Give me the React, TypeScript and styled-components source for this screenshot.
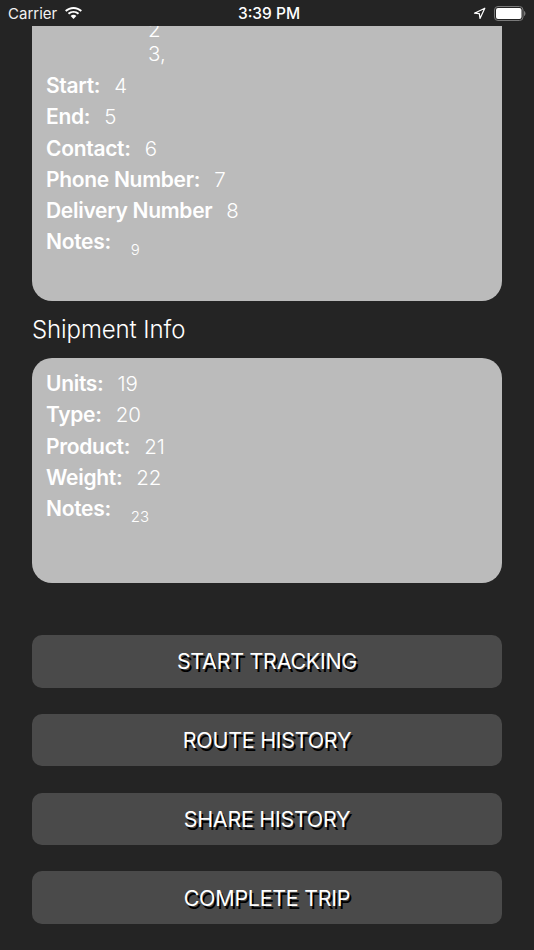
import React, { FC } from 'react'
import styled, { createGlobalStyle } from 'styled-components'

const GlobalStyle = createGlobalStyle`
  html, body {
    margin: 0;
    padding: 0;
    background: #242424;
  }
  * {
    box-sizing: border-box;
  }
`

const Screen = styled.div`
  width: 534px;
  height: 950px;
  background: #242424;
  color: #fff;
  font-family: Inter, 'Noto Sans', sans-serif;
  display: flex;
  flex-direction: column;
  overflow: hidden;
`

const StatusBar = styled.header`
  height: 26px;
  flex: none;
  display: grid;
  grid-template-columns: 1fr auto 1fr;
  align-items: center;
  padding: 0 8px 0 8px;
`

const StatusLeft = styled.div`
  display: flex;
  align-items: center;
  gap: 7px;
  font-size: 15px;
  color: #f2f2f2;
`

const Clock = styled.div`
  font-size: 15.5px;
  font-weight: 500;
  margin-left: 4px;
`

const StatusRight = styled.div`
  display: flex;
  align-items: center;
  justify-content: flex-end;
  gap: 8px;
`

const Viewport = styled.main`
  flex: 1;
  min-height: 0;
  overflow: hidden;
  padding: 0 32px;
`

const Card = styled.section<{ $height: number; $clipped?: boolean }>`
  height: ${({ $height }) => $height}px;
  background: #bbbbbb;
  border-radius: ${({ $clipped }) => ($clipped ? '0 0 20px 20px' : '20px')};
  padding: ${({ $clipped }) => ($clipped ? '0' : '10px')} 14px 0;
  overflow: hidden;
`

const AddressLines = styled.div`
  padding-left: 102px;
  font-size: 20.5px;
  font-weight: 350;
  line-height: 24px;
  height: 40px;
  margin-bottom: 4px;
  display: flex;
  flex-direction: column;
  justify-content: flex-end;
`

const Row = styled.div`
  display: flex;
  align-items: baseline;
  gap: 14px;
  height: 31.3px;
  line-height: 31.3px;
  white-space: nowrap;
`

const Label = styled.span`
  font-size: 21px;
  font-weight: 600;
  letter-spacing: -0.3px;
`

const Value = styled.span<{ $small?: boolean }>`
  font-size: ${({ $small }) => ($small ? 15 : 20.5)}px;
  font-weight: 350;
  ${({ $small }) => $small && 'position: relative; top: 6px; margin-left: 6px;'}
`

const SectionTitle = styled.h2`
  margin: 0;
  height: 57px;
  display: flex;
  align-items: center;
  font-size: 24px;
  font-weight: 350;
  letter-spacing: -0.1px;
`

const Actions = styled.div`
  display: flex;
  flex-direction: column;
  gap: 26.3px;
  margin-top: 52px;
`

const ActionButton = styled.button`
  height: 52.5px;
  width: 100%;
  border: 0;
  border-radius: 10px;
  background: #4a4a4a;
  color: #fff;
  font-family: inherit;
  font-size: 21.5px;
  font-weight: 400;
  letter-spacing: -0.3px;
  text-shadow: 2px 2.5px 0.5px #000;
`

interface InfoRowProps {
  label: string
  value: string
  small?: boolean
}

const InfoRow: FC<InfoRowProps> = ({ label, value, small }) => (
  <Row>
    <Label>{label}</Label>
    <Value $small={small}>{value}</Value>
  </Row>
)

const tripRows: InfoRowProps[] = [
  { label: 'Start:', value: '4' },
  { label: 'End:', value: '5' },
  { label: 'Contact:', value: '6' },
  { label: 'Phone Number:', value: '7' },
  { label: 'Delivery Number', value: '8' },
  { label: 'Notes:', value: '9', small: true },
]

const shipmentRows: InfoRowProps[] = [
  { label: 'Units:', value: '19' },
  { label: 'Type:', value: '20' },
  { label: 'Product:', value: '21' },
  { label: 'Weight:', value: '22' },
  { label: 'Notes:', value: '23', small: true },
]

const actions = ['START TRACKING', 'ROUTE HISTORY', 'SHARE HISTORY', 'COMPLETE TRIP']

const WifiIcon = () => (
  <svg width="19" height="14" viewBox="0 0 18 13" fill="#fff">
    <path d="M9 2.6c2.6 0 5 1 6.800 2.700l1.200-1.300C14.900 2 12.100 .8 9 .8S3.100 2 1 4l1.200 1.300C4 3.600 6.400 2.600 9 2.600z" />
    <path d="M9 6.300c1.600 0 3 .6 4.100 1.600l1.300-1.300C13 5.200 11.100 4.500 9 4.500s-4 .7-5.400 2.100l1.300 1.300C6 6.900 7.400 6.300 9 6.300z" />
    <path d="M9 8.200c-1.100 0-2 .4-2.700 1.100L9 12.200l2.700-2.900C11 8.600 10.100 8.200 9 8.200z" />
  </svg>
)

const LocationIcon = () => (
  <svg width="13" height="13" viewBox="0 0 13 13" fill="none" stroke="#fff" strokeWidth="1.2">
    <path d="M11.800 1.200 1.500 6.200l4.800.5.700 4.800z" strokeLinejoin="round" />
  </svg>
)

const BatteryIcon = () => (
  <svg width="32" height="15" viewBox="0 0 32 15">
    <rect x=".5" y=".5" width="28.500" height="14" rx="3.500" fill="none" stroke="#7a7a7a" />
    <rect x="2" y="2" width="25.500" height="11" rx="2" fill="#fff" />
    <path d="M30 5v5c.9-.3 1.500-1.300 1.500-2.500S30.900 5.300 30 5z" fill="#7a7a7a" />
  </svg>
)

const App: FC = () => (
  <Screen>
    <GlobalStyle />
    <StatusBar>
      <StatusLeft>
        Carrier
        <WifiIcon />
      </StatusLeft>
      <Clock>3:39 PM</Clock>
      <StatusRight>
        <LocationIcon />
        <BatteryIcon />
      </StatusRight>
    </StatusBar>
    <Viewport>
      <Card $height={275} $clipped>
        <AddressLines>
          <span>2</span>
          <span>3,</span>
        </AddressLines>
        {tripRows.map((row) => (
          <InfoRow key={row.label} {...row} />
        ))}
      </Card>
      <SectionTitle>Shipment Info</SectionTitle>
      <Card $height={225}>
        {shipmentRows.map((row) => (
          <InfoRow key={row.label} {...row} />
        ))}
      </Card>
      <Actions>
        {actions.map((action) => (
          <ActionButton key={action}>{action}</ActionButton>
        ))}
      </Actions>
    </Viewport>
  </Screen>
)

export default App
